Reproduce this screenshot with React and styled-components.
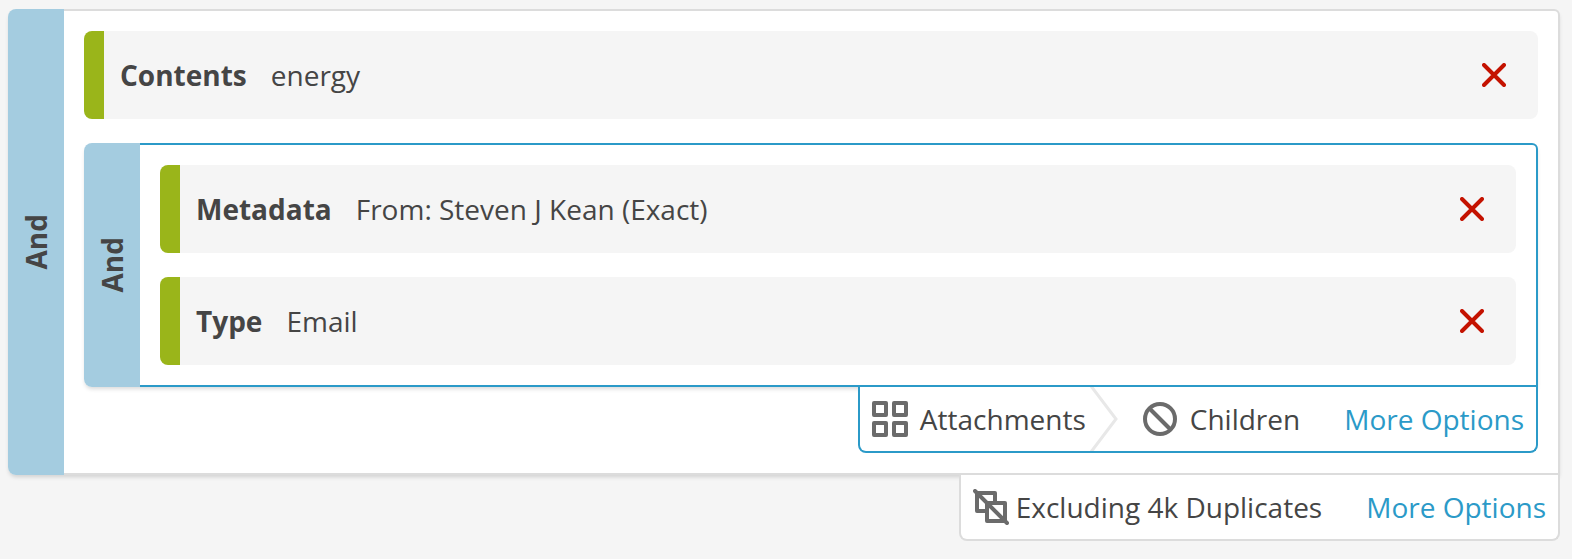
import React, { useState } from 'react';
import styled, { createGlobalStyle } from 'styled-components';

const GlobalStyle = createGlobalStyle`
    * {
        box-sizing: border-box;
    }

    body {
        margin: 0;
        background: #f5f5f5;
        color: #454545;
        font-family: 'Open Sans', sans-serif;
        font-size: 28px;
    }
`

const Page = styled.main`
    padding: 9px 12px 18px 8px;
`

const GroupWrapper = styled.section`
    display: flex;
    flex-direction: column;
`

const GroupBox = styled.div`
    display: flex;
    border-radius: 8px 6px 0 8px;
    box-shadow: 0 3px 4px -1px rgba(0, 0, 0, 0.15);
`

const Operator = styled.button`
    width: 56px;
    flex-shrink: 0;
    display: flex;
    align-items: center;
    justify-content: center;
    padding: 0;
    border: none;
    border-radius: 8px 0 0 8px;
    background: #a4cce0;
    color: inherit;
    font: inherit;
    font-weight: bold;
    cursor: pointer;
`

const OperatorText = styled.span`
    writing-mode: vertical-rl;
    transform: rotate(180deg);
`

const GroupBody = styled.div`
    flex: 1;
    display: flex;
    flex-direction: column;
    gap: 24px;
    padding: 20px;
    border: 2px solid ${props => props.$color};
    border-left: none;
    border-radius: 0 6px 0 0;
    background: white;
`

const Term = styled.div`
    height: 88px;
    display: flex;
    align-items: center;
    padding: 0 32px 0 16px;
    border-left: 20px solid #9ab51a;
    border-radius: 8px;
    background: #f5f5f5;
`

const TermName = styled.span`
    font-weight: bold;
    margin-right: 24px;
`

const TermValue = styled.span`
    flex: 1;
`

const RemoveButton = styled.button`
    display: flex;
    padding: 0;
    border: none;
    background: none;
    color: #c41200;
    cursor: pointer;
`

const Footer = styled.div`
    position: relative;
    align-self: flex-end;
    height: 66px;
    display: flex;
    align-items: center;
    padding: 0 12px;
    border: 2px solid ${props => props.$color};
    border-top: none;
    border-radius: 0 0 8px 8px;
    background: white;
    white-space: nowrap;
`

const FooterItem = styled.div`
    display: flex;
    align-items: center;
    gap: ${props => props.$gap}px;

    svg {
        color: #6b6b6b;
    }
`

const MoreLink = styled.a`
    margin-left: 44px;
    color: #2b9ac8;
    cursor: pointer;
`

const Arrow = styled.svg`
    margin: 0 25px 0 4px;
`

const RemoveIcon = () => (
    <svg width="24" height="24" viewBox="0 0 24 24" fill="none" stroke="currentColor" strokeWidth="4" strokeLinecap="round">
        <path d="M2 2L22 22M22 2L2 22"/>
    </svg>
)

const AttachmentsIcon = () => (
    <svg width="36" height="36" viewBox="0 0 36 36" fill="none" stroke="currentColor" strokeWidth="4" strokeLinejoin="round">
        <path d="M2 2h12v12H2zM22 2h12v12H22zM2 22h12v12H2zM22 22h12v12H22z"/>
    </svg>
)

const NoneIcon = () => (
    <svg width="34" height="34" viewBox="0 0 34 34" fill="none" stroke="currentColor" strokeWidth="4">
        <circle cx="17" cy="17" r="15"/>
        <path d="M6.5 6.5l21 21"/>
    </svg>
)

const DuplicatesIcon = () => (
    <svg width="36" height="36" viewBox="0 0 36 36" fill="white" stroke="currentColor" strokeWidth="4" strokeLinejoin="round" strokeLinecap="round">
        <path d="M4 4h18v18H4z"/>
        <path d="M14 14h18v18H14z"/>
        <path d="M2 2l32 32"/>
    </svg>
)

const ArrowDivider = () => (
    <Arrow width="28" height="64" viewBox="0 0 28 64" fill="none" stroke="#e8e8e8" strokeWidth="3">
        <path d="M1 -1L26 32L1 65"/>
    </Arrow>
)

const query = {
    id: 1,
    color: '#dcdcdc',
    children: [
        {id: 2, name: 'Contents', value: 'energy'},
        {
            id: 3,
            color: '#2b9ac8',
            family: true,
            children: [
                {id: 4, name: 'Metadata', value: 'From: Steven J Kean (Exact)'},
                {id: 5, name: 'Type', value: 'Email'}
            ]
        }
    ]
}

function Group({group}) {
    const [operator,setOperator] = useState('And')
    const [removed,setRemoved] = useState([])

    const flipOperator = () => {
        setOperator(operator === 'And' ? 'Or' : 'And')
    }

    return (
        <GroupWrapper>
            <GroupBox>
                <Operator onClick={flipOperator}>
                    <OperatorText>{operator}</OperatorText>
                </Operator>
                <GroupBody $color={group.color}>
                    {group.children.filter(item => !removed.includes(item.id)).map(item => {
                        if (item.children) {
                            return <Group key={item.id} group={item} />
                        }
                        return (
                            <Term key={item.id}>
                                <TermName>{item.name}</TermName>
                                <TermValue>{item.value}</TermValue>
                                <RemoveButton onClick={()=>setRemoved([...removed, item.id])}>
                                    <RemoveIcon />
                                </RemoveButton>
                            </Term>
                        )
                    })}
                </GroupBody>
            </GroupBox>
            <Footer $color={group.color}>
                {group.family ?
                    <>
                        <FooterItem $gap={12}>
                            <AttachmentsIcon />
                            Attachments
                        </FooterItem>
                        <ArrowDivider />
                        <FooterItem $gap={13}>
                            <NoneIcon />
                            Children
                        </FooterItem>
                    </>
                :
                    <FooterItem $gap={7}>
                        <DuplicatesIcon />
                        Excluding 4k Duplicates
                    </FooterItem>
                }
                <MoreLink>More Options</MoreLink>
            </Footer>
        </GroupWrapper>
    )
}

function App() {
    return (
        <>
            <GlobalStyle />
            <Page>
                <Group group={query} />
            </Page>
        </>
    )
}

export default App;
